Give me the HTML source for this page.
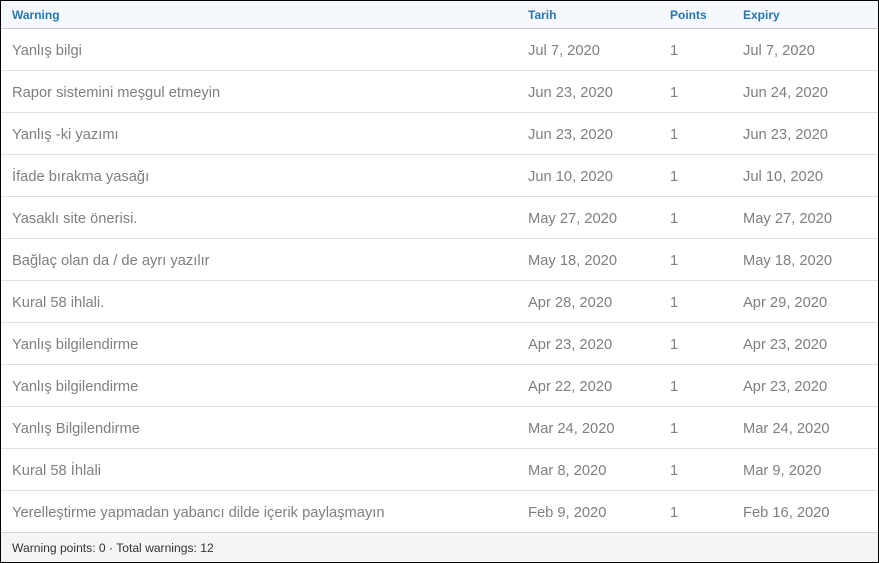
<!DOCTYPE html>
<html><head><style>
html,body{margin:0;padding:0;background:#fff;}
.box{position:absolute;left:0;top:0;width:877px;height:561px;border:1px solid #000;overflow:hidden;font-family:"Liberation Sans",sans-serif;}
.hd{height:27px;background:#f5f8fc;border-bottom:1px solid #c8c8c8;position:relative;}
.hd span{position:absolute;top:7px;font-size:12px;font-weight:bold;color:#2577b1;}
.row{height:41px;border-bottom:1px solid #e2e2e2;position:relative;}
.row span{position:absolute;top:13.5px;font-size:14.7px;color:#7f7f7f;}
.c1{left:11px}.c2{left:527px}.c3{left:669px}.c4{left:742px}
.ft{position:absolute;left:0;right:0;top:531px;height:30px;background:#f5f5f5;border-top:1px solid #d5d5d5;}
.ft span{position:absolute;left:11px;top:8px;font-size:12.1px;color:#333;}
</style></head><body><div class="box">
<div class="hd"><span class="c1">Warning</span><span class="c2">Tarih</span><span class="c3">Points</span><span class="c4">Expiry</span></div>
<div class="row"><span class="c1">Yanlış bilgi</span><span class="c2">Jul 7, 2020</span><span class="c3">1</span><span class="c4">Jul 7, 2020</span></div>
<div class="row"><span class="c1">Rapor sistemini meşgul etmeyin</span><span class="c2">Jun 23, 2020</span><span class="c3">1</span><span class="c4">Jun 24, 2020</span></div>
<div class="row"><span class="c1">Yanlış -ki yazımı</span><span class="c2">Jun 23, 2020</span><span class="c3">1</span><span class="c4">Jun 23, 2020</span></div>
<div class="row"><span class="c1">İfade bırakma yasağı</span><span class="c2">Jun 10, 2020</span><span class="c3">1</span><span class="c4">Jul 10, 2020</span></div>
<div class="row"><span class="c1">Yasaklı site önerisi.</span><span class="c2">May 27, 2020</span><span class="c3">1</span><span class="c4">May 27, 2020</span></div>
<div class="row"><span class="c1">Bağlaç olan da / de ayrı yazılır</span><span class="c2">May 18, 2020</span><span class="c3">1</span><span class="c4">May 18, 2020</span></div>
<div class="row"><span class="c1">Kural 58 ihlali.</span><span class="c2">Apr 28, 2020</span><span class="c3">1</span><span class="c4">Apr 29, 2020</span></div>
<div class="row"><span class="c1">Yanlış bilgilendirme</span><span class="c2">Apr 23, 2020</span><span class="c3">1</span><span class="c4">Apr 23, 2020</span></div>
<div class="row"><span class="c1">Yanlış bilgilendirme</span><span class="c2">Apr 22, 2020</span><span class="c3">1</span><span class="c4">Apr 23, 2020</span></div>
<div class="row"><span class="c1">Yanlış Bilgilendirme</span><span class="c2">Mar 24, 2020</span><span class="c3">1</span><span class="c4">Mar 24, 2020</span></div>
<div class="row"><span class="c1">Kural 58 İhlali</span><span class="c2">Mar 8, 2020</span><span class="c3">1</span><span class="c4">Mar 9, 2020</span></div>
<div class="row" style="border-bottom:none"><span class="c1">Yerelleştirme yapmadan yabancı dilde içerik paylaşmayın</span><span class="c2">Feb 9, 2020</span><span class="c3">1</span><span class="c4">Feb 16, 2020</span></div>
<div class="ft"><span>Warning points: 0 · Total warnings: 12</span></div>
</div></body></html>
